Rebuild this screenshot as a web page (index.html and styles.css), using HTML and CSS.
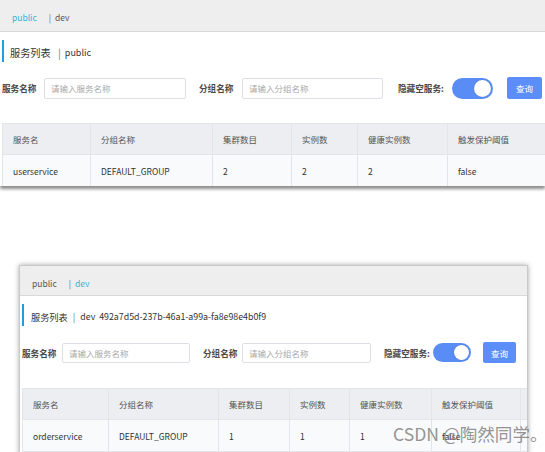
FILE: index.html
```html
<!DOCTYPE html>
<html lang="zh-CN">
<head>
    <meta charset="UTF-8">
    <meta name="viewport" content="width=device-width, initial-scale=1.0">
    <title>服务列表</title>
    <link rel="stylesheet" href="styles.css">
</head>
<body>
    <!-- namespace: public -->
    <div class="shot shot-public">
        <div class="ns-bar">
            <span class="ns active">public</span>
            <span class="ns-sep">|</span>
            <span class="ns">dev</span>
        </div>
        <div class="page">
            <h2 class="page-title">服务列表 <span class="title-sep">|</span> <span class="ns-id">public</span></h2>
            <div class="search">
                <label class="field-label">服务名称</label>
                <input class="field-input" type="text" placeholder="请输入服务名称">
                <label class="field-label spaced">分组名称</label>
                <input class="field-input" type="text" placeholder="请输入分组名称">
                <label class="field-label spaced">隐藏空服务:</label>
                <span class="switch"><span class="knob"></span></span>
                <button class="btn-query">查询</button>
            </div>
            <table class="svc-table">
                <colgroup>
                    <col class="c1"><col class="c2"><col class="c3"><col class="c4"><col class="c5"><col class="c6"><col class="c7">
                </colgroup>
                <thead>
                    <tr><th>服务名</th><th>分组名称</th><th>集群数目</th><th>实例数</th><th>健康实例数</th><th>触发保护阈值</th><th></th></tr>
                </thead>
                <tbody>
                    <tr><td>userservice</td><td>DEFAULT_GROUP</td><td>2</td><td>2</td><td>2</td><td>false</td><td></td></tr>
                </tbody>
            </table>
        </div>
    </div>

    <!-- namespace: dev -->
    <div class="shot shot-dev">
        <div class="ns-bar">
            <span class="ns">public</span>
            <span class="ns-sep">|</span>
            <span class="ns active">dev</span>
        </div>
        <div class="page">
            <h2 class="page-title">服务列表 <span class="title-sep">|</span> <span class="ns-id">dev&nbsp; 492a7d5d-237b-46a1-a99a-fa8e98e4b0f9</span></h2>
            <div class="search">
                <label class="field-label">服务名称</label>
                <input class="field-input" type="text" placeholder="请输入服务名称">
                <label class="field-label spaced">分组名称</label>
                <input class="field-input" type="text" placeholder="请输入分组名称">
                <label class="field-label spaced">隐藏空服务:</label>
                <span class="switch"><span class="knob"></span></span>
                <button class="btn-query">查询</button>
            </div>
            <table class="svc-table">
                <colgroup>
                    <col class="c1"><col class="c2"><col class="c3"><col class="c4"><col class="c5"><col class="c6"><col class="c7">
                </colgroup>
                <thead>
                    <tr><th>服务名</th><th>分组名称</th><th>集群数目</th><th>实例数</th><th>健康实例数</th><th>触发保护阈值</th><th></th></tr>
                </thead>
                <tbody>
                    <tr><td>orderservice</td><td>DEFAULT_GROUP</td><td>1</td><td>1</td><td>1</td><td>false</td><td></td></tr>
                </tbody>
            </table>
        </div>
    </div>

    <div class="watermark">CSDN @陶然同学。</div>
</body>
</html>
```

FILE: styles.css
```css
* {
    margin: 0;
    padding: 0;
    box-sizing: border-box;
}

body {
    position: relative;
    width: 545px;
    height: 452px;
    overflow: hidden;
    background: #fff;
    font-family: "Noto Sans CJK SC", "Noto Sans", sans-serif;
    color: #333;
}

/* one screenshot of the console */
.shot {
    overflow: hidden;
    background: #fff;
}

.shot-public {
    width: 545px;
    height: 186px;
    box-shadow: 0 3px 3px rgba(0, 0, 0, 0.45);
    --label-1: 42px;
    --label-2: 43px;
    --label-3: 54px;
    --input-w: 142px;
    --input-w2: 141px;
    --gap: 13px;
    --gap-2: 15px;
    --switch-w: 41px;
    --btn-w: 35px;
    --btn-gap: 14px;
}

.shot-dev {
    width: 509px;
    height: 200px;
    margin: 79px 0 0 19px;
    border: 1px solid #c9c9c9;
    box-shadow: 0 0 5px rgba(0, 0, 0, 0.35);
    --label-1: 40px;
    --label-2: 39px;
    --label-3: 49px;
    --input-w: 128px;
    --input-w2: 129px;
    --gap: 13px;
    --gap-2: 13px;
    --switch-w: 38px;
    --btn-w: 33px;
    --btn-gap: 12px;
}

/* namespace bar */
.ns-bar {
    display: flex;
    align-items: center;
    height: 32px;
    padding: 2px 0 0 12px;
    background: #eeeeee;
    border-bottom: 1px solid #d9d9d9;
    font-size: 8.5px;
    color: #555;
}

.shot-dev .ns-bar {
    height: 30px;
    padding-top: 4px;
}

.ns.active {
    color: #36b2d8;
}

.ns-sep {
    margin: 0 4px 0 12px;
    color: #666;
}

.page {
    padding-left: 2px;
}

.page-title {
    display: flex;
    align-items: center;
    height: 22px;
    margin-top: 8px;
    padding: 3px 0 0 6px;
    border-left: 2px solid #1f9fd7;
    font-size: 10.2px;
    font-weight: normal;
    color: #333;
    white-space: pre;
}

.shot-dev .page-title {
    font-size: 9.2px;
    padding-left: 7px;
}

.ns-id {
    font-size: 9px;
}

.shot-dev .ns-id {
    font-size: 8.8px;
}

.title-sep {
    margin: 0 4px 0 5px;
    color: #5c76a8;
}

.shot-dev .title-sep {
    margin: 0 5px 0 3px;
}

/* search row */
.search {
    display: flex;
    align-items: center;
    height: 22px;
    margin-top: 15px;
}

.shot-dev .search {
    margin-top: 16px;
    height: 21px;
}

.field-label {
    width: var(--label-1);
    font-size: 8.6px;
    font-weight: bold;
    color: #4a4a4a;
    white-space: nowrap;
}

.field-label.spaced {
    margin-left: var(--gap);
    width: var(--label-2);
}

.field-label.spaced:nth-of-type(3) {
    margin-left: var(--gap-2);
    width: var(--label-3);
}

.field-input {
    width: var(--input-w);
    height: 21px;
    padding: 0 6px;
    border: 1px solid #dcdfe6;
    border-radius: 2px;
    font-family: inherit;
    font-size: 8.5px;
    color: #333;
    outline: none;
}

.field-input:nth-of-type(2) {
    width: var(--input-w2);
}

.shot-dev .field-input {
    height: 20px;
}

.field-input::placeholder {
    color: #a9a9a9;
}

.switch {
    position: relative;
    width: var(--switch-w);
    height: 21px;
    border-radius: 11px;
    background: #5a8cf6;
}

.shot-dev .switch {
    height: 19px;
}

.knob {
    position: absolute;
    top: 2px;
    right: 2px;
    width: 17px;
    height: 17px;
    border-radius: 50%;
    background: #fff;
    box-shadow: 0 0 1px rgba(0, 0, 0, 0.3);
}

.shot-dev .knob {
    width: 15px;
    height: 15px;
}

.btn-query {
    width: var(--btn-w);
    height: 22px;
    margin-left: var(--btn-gap);
    border: none;
    border-radius: 2px;
    background: #5b8ef9;
    color: #fff;
    font-family: inherit;
    font-size: 8.5px;
}

.shot-dev .btn-query {
    height: 21px;
}

/* service table */
.svc-table {
    table-layout: fixed;
    width: 640px;
    margin-top: 24px;
    border-collapse: collapse;
    font-size: 8.5px;
}

.shot-dev .svc-table {
    margin-top: 25px;
    width: 580px;
}

.svc-table th,
.svc-table td {
    padding: 0 10px;
    border: 1px solid #e3e5e9;
    text-align: left;
    white-space: nowrap;
    overflow: hidden;
}

.svc-table th {
    height: 31px;
    background: #eceef1;
    font-weight: normal;
    color: #555;
}

.svc-table td {
    height: 32px;
    background: #f9fafb;
    color: #333;
}

.shot-public .c1 { width: 88px; }
.shot-public .c2 { width: 122px; }
.shot-public .c3 { width: 79px; }
.shot-public .c4 { width: 66px; }
.shot-public .c5 { width: 90px; }
.shot-public .c6 { width: 98px; }
.shot-public .c7 { width: 97px; }

.shot-dev .c1 { width: 86px; }
.shot-dev .c2 { width: 110px; }
.shot-dev .c3 { width: 71px; }
.shot-dev .c4 { width: 60px; }
.shot-dev .c5 { width: 82px; }
.shot-dev .c6 { width: 89px; }
.shot-dev .c7 { width: 82px; }

.watermark {
    position: absolute;
    left: 393px;
    top: 421px;
    font-size: 17.6px;
    color: rgba(120, 120, 120, 0.8);
    white-space: nowrap;
}
```
